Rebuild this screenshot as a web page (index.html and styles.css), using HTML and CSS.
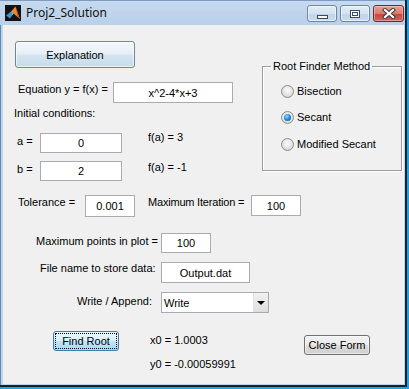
FILE: index.html
```html
<!DOCTYPE html>
<html>
<head>
<meta charset="utf-8">
<title>Proj2_Solution</title>
<link rel="stylesheet" href="styles.css">
</head>
<body>
<div class="window">
  <div class="titlebar">
    <svg class="app-icon" width="16" height="16" viewBox="0 0 16 16">
      <rect width="16" height="16" fill="#121212"/>
      <path d="M1 10.5 L6 6.5 L8.5 8.5 L5 13.5 Z" fill="#3d93cf"/>
      <path d="M6 6.5 L10.5 1.5 L15 14 L12 11.5 L8.5 8.5 Z" fill="#e98a2c"/>
      <path d="M10.5 1.5 L15 14 L13 12.5 Z" fill="#b8401c"/>
      <path d="M6 6.5 L8.5 8.5 L7.5 10 Z" fill="#7fc3ec"/>
    </svg>
    <span class="title">Proj2_Solution</span>
    <div class="caption">
      <div class="cbtn cbtn-min"><span class="glyph-min"></span></div>
      <div class="cbtn cbtn-max"><span class="glyph-max"></span></div>
      <div class="cbtn cbtn-close">
        <svg width="14" height="11" viewBox="0 0 14 11">
          <path d="M3 2 L11 9 M11 2 L3 9" stroke="#3b3b45" stroke-width="4.2" stroke-linecap="square"/>
          <path d="M3 2 L11 9 M11 2 L3 9" stroke="#ffffff" stroke-width="2.2" stroke-linecap="square"/>
        </svg>
      </div>
    </div>
  </div>
  <div class="client">
    <div class="top">
      <div class="left">
        <button class="btn btn-explain">Explanation</button>
        <div class="row row-eq">
          <span class="lbl lbl-eq">Equation y = f(x) =</span>
          <div class="edit edit-eq">x^2-4*x+3</div>
        </div>
        <div class="init">Initial conditions:</div>
        <div class="row row-a">
          <span class="lbl lbl-ab">a =</span>
          <div class="edit edit-ab">0</div>
          <span class="fval fval-a">f(a) = 3</span>
        </div>
        <div class="row row-b">
          <span class="lbl lbl-ab">b =</span>
          <div class="edit edit-ab">2</div>
          <span class="fval fval-b">f(a) = -1</span>
        </div>
      </div>
      <fieldset class="group">
        <legend>Root Finder Method</legend>
        <div class="radio-row r1"><span class="radio"></span>Bisection</div>
        <div class="radio-row r2"><span class="radio on"></span>Secant</div>
        <div class="radio-row r3"><span class="radio"></span>Modified Secant</div>
      </fieldset>
    </div>
    <div class="row row-tol">
      <span class="lbl lbl-tol">Tolerance =</span>
      <div class="edit edit-tol">0.001</div>
      <span class="lbl lbl-iter">Maximum Iteration =</span>
      <div class="edit edit-iter">100</div>
    </div>
    <div class="row row-pts">
      <span class="lbl lbl-pts">Maximum points in plot =</span>
      <div class="edit edit-pts">100</div>
    </div>
    <div class="row row-file">
      <span class="lbl lbl-file">File name to store data:</span>
      <div class="edit edit-file">Output.dat</div>
    </div>
    <div class="row row-write">
      <span class="lbl lbl-write">Write / Append:</span>
      <div class="select">
        <span class="select-text">Write</span>
        <span class="select-arrow"><span class="tri"></span></span>
      </div>
    </div>
    <div class="row row-bottom">
      <button class="btn btn-find">Find Root</button>
      <div class="results">
        <div class="res res-x">x0 = 1.0003</div>
        <div class="res res-y">y0 = -0.00059991</div>
      </div>
      <button class="btn btn-close">Close Form</button>
    </div>
  </div>
</div>
</body>
</html>
```

FILE: styles.css
```css
* { box-sizing: border-box; }

body {
  margin: 0;
  width: 409px;
  height: 389px;
  overflow: hidden;
  background: #1ea3e3;
  font-family: "Liberation Sans", Arial, sans-serif;
  font-size: 11px;
  color: #000;
}

.window {
  width: 407px;
  height: 387px;
  border-right: 2px solid #15202e;
  border-bottom: 2px solid #15202e;
  background: #bfd5ec;
  padding: 0 1px 1px 3px;
  display: flex;
  flex-direction: column;
  box-shadow: inset 1px 0 0 #5f88b6;
}

/* title bar */
.titlebar {
  height: 25px;
  flex: none;
  margin: 0 -1px 0 -3px;
  padding-left: 5px;
  display: flex;
  align-items: center;
  background: linear-gradient(#c6d9ee, #b9d0e9);
  border-top: 1px solid #7e9cc0;
}

.app-icon { flex: none; }

.title {
  margin-left: 5px;
  font-family: "Noto Sans", "Open Sans", sans-serif;
  font-size: 12px;
  color: #111;
  line-height: 16px;
}

.caption {
  margin-left: auto;
  margin-right: 1px;
  align-self: flex-start;
  margin-top: 4px;
  display: flex;
  gap: 3px;
}

.cbtn {
  width: 30px;
  height: 17px;
  border: 1px solid #6f86a3;
  border-radius: 3px;
  background: linear-gradient(#e3ecf7 0%, #d3e1f1 50%, #c1d4ea 51%, #c8daee 100%);
  box-shadow: inset 0 0 0 1px rgba(255,255,255,0.55);
  display: flex;
  align-items: center;
  justify-content: center;
}

.cbtn-close {
  width: 31px;
  border-color: #6e2a26;
  background: linear-gradient(#e7a395 0%, #d77b6c 50%, #c1493a 51%, #cc6455 100%);
  box-shadow: inset 0 0 0 1px rgba(255,220,210,0.45);
}

.glyph-min {
  width: 11px;
  height: 4px;
  margin-top: 6px;
  border: 1px solid #3c4a5f;
  background: #fff;
}

.glyph-max {
  width: 10px;
  height: 8px;
  border: 1px solid #3c4a5f;
  background: #fff;
  box-shadow: inset 0 0 0 1px #fff, inset 0 0 0 2px #3c4a5f;
}

/* client area */
.client {
  flex: 1;
  background: #f0f0f0;
  display: flex;
  flex-direction: column;
  align-items: flex-start;
}

.top {
  display: flex;
  align-items: flex-start;
}

.left {
  width: 259px;
  display: flex;
  flex-direction: column;
  align-items: flex-start;
}

.row {
  display: flex;
  align-items: flex-start;
}

.lbl, .fval, .init, .res {
  line-height: 13px;
  white-space: nowrap;
}

.edit {
  background: #fff;
  border: 1px solid #a9abb0;
  display: flex;
  align-items: center;
  justify-content: center;
  line-height: 13px;
  padding-top: 1px;
}

.btn {
  font: inherit;
  font-size: 11px;
  color: #000;
  padding: 0;
  margin: 0;
  border-radius: 3px;
  display: flex;
  align-items: center;
  justify-content: center;
  line-height: 13px;
}

.btn-explain {
  margin: 16px 0 0 12px;
  width: 120px;
  height: 27px;
  padding-top: 2px;
  border: 1px solid #70859e;
  background: linear-gradient(#f3f7fb 0%, #e7eff7 48%, #d5e5f1 52%, #c6dbe9 100%);
  box-shadow: inset 0 0 0 1px rgba(255,255,255,0.6);
}

.row-eq { margin-top: 14px; }
.lbl-eq { margin: 1px 0 0 15px; width: 95px; }
.edit-eq { width: 120px; height: 21px; }

.init { margin: 4px 0 0 11px; }

.row-a { margin-top: 13px; }
.row-b { margin-top: 8px; }
.lbl-ab { margin: 2px 0 0 14px; width: 23px; }
.edit-ab { width: 82px; height: 20px; }
.fval { margin-left: 26px; }
.fval-a { margin-top: -2px; }
.fval-b { margin-top: 0; }

/* group box */
.group {
  margin: 35px 0 0 0;
  width: 140px;
  height: 111px;
  padding: 0;
  min-width: 0;
  border: 1px solid #9c9c9c;
  box-shadow: inset 1px 1px 0 #ffffff, 1px 1px 0 #ffffff;
}

.group legend {
  margin-left: 8px;
  padding: 0 2px;
  line-height: 13px;
  font-size: 11px;
}

.radio-row {
  display: flex;
  align-items: center;
  gap: 3px;
  height: 14px;
  margin-left: 18px;
  line-height: 13px;
}
.r1 { margin-top: 11px; }
.r2 { margin-top: 12px; }
.r3 { margin-top: 13px; }

.radio {
  width: 13px;
  height: 13px;
  border-radius: 50%;
  border: 1px solid #8b8d8f;
  background: radial-gradient(circle at 50% 40%, #fbfbfb 0%, #e8e8e8 45%, #cbcbcb 100%);
  display: flex;
  align-items: center;
  justify-content: center;
  flex: none;
}
.radio.on::after {
  content: "";
  width: 7px;
  height: 7px;
  border-radius: 50%;
  background: radial-gradient(circle at 40% 35%, #92dcff 0%, #2b8fd8 45%, #0b4b86 100%);
}

/* lower rows */
.row-tol { margin-top: 14px; }
.lbl-tol { margin: 1px 0 0 15px; width: 67px; }
.edit-tol { width: 50px; height: 22px; }
.lbl-iter { margin: 1px 0 0 13px; width: 103px; letter-spacing: -0.2px; }
.edit-iter { width: 50px; height: 21px; }

.row-pts { margin-top: 16px; }
.lbl-pts { margin: 2px 0 0 33px; width: 125px; }
.edit-pts { width: 50px; height: 20px; }

.row-file { margin-top: 9px; }
.lbl-file { margin: 0 0 0 37px; width: 121px; }
.edit-file { width: 89px; height: 21px; }

.row-write { margin-top: 9px; }
.lbl-write { margin: 3px 0 0 74px; width: 84px; }

.select {
  width: 108px;
  height: 21px;
  background: #fff;
  border: 1px solid #a9abb0;
  display: flex;
  align-items: stretch;
}
.select-text {
  flex: 1;
  padding: 4px 0 0 2px;
  line-height: 13px;
}
.select-arrow {
  width: 15px;
  background: linear-gradient(#f2f2f2, #dedede);
  border-left: 1px solid #e0e0e0;
  display: flex;
  align-items: center;
  justify-content: center;
}
.tri {
  width: 0;
  height: 0;
  border-left: 4px solid transparent;
  border-right: 4px solid transparent;
  border-top: 4px solid #000;
  margin-top: 1px;
}

.row-bottom {
  margin-top: 18px;
  width: 100%;
}

.btn-find {
  margin-left: 50px;
  width: 66px;
  height: 20px;
  border: 1px solid #3c7fb1;
  background: linear-gradient(#eaf6fd 0%, #d9f0fc 48%, #bee6fd 52%, #a7d9f5 100%);
  outline: 1px dotted #000;
  outline-offset: -3px;
}

.results {
  margin: 3px 0 0 31px;
  display: flex;
  flex-direction: column;
}
.res-y { margin-top: 11px; }

.btn-close {
  margin: 4px 34px 0 auto;
  width: 66px;
  height: 20px;
  border: 1px solid #707070;
  background: linear-gradient(#f2f2f2 0%, #ebebeb 48%, #dddddd 52%, #cfcfcf 100%);
  box-shadow: inset 0 0 0 1px rgba(255,255,255,0.5);
}
```
